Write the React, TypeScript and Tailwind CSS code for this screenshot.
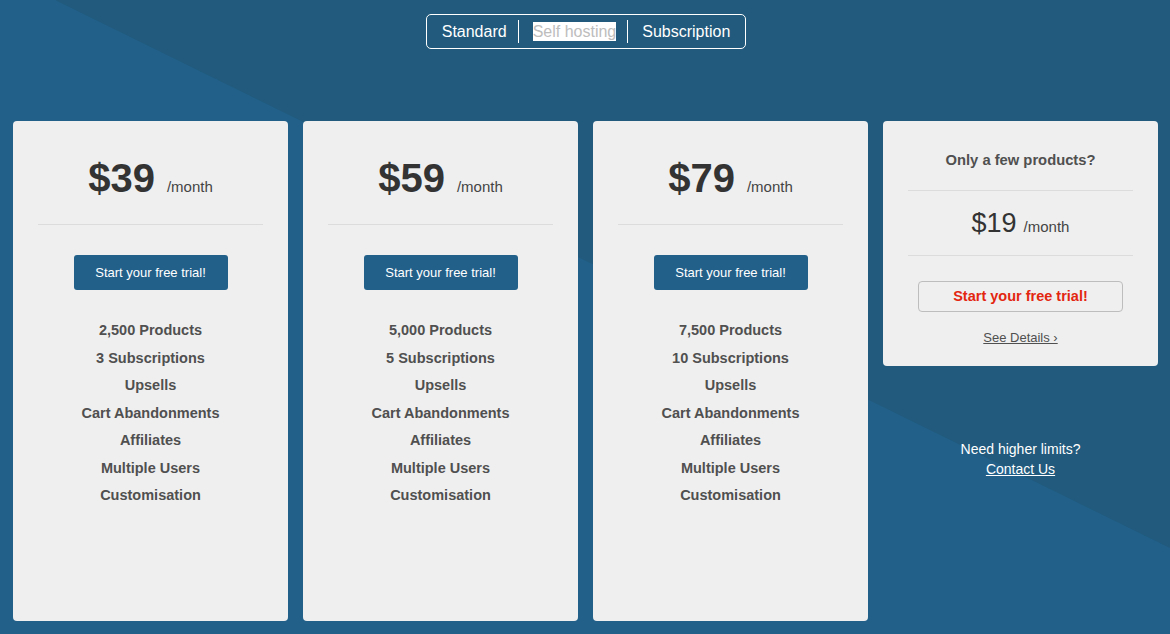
import React from "react";

const features = (a: string, b: string) => [
  a,
  b,
  "Upsells",
  "Cart Abandonments",
  "Affiliates",
  "Multiple Users",
  "Customisation",
];

const plans = [
  { price: "$39", items: features("2,500 Products", "3 Subscriptions") },
  { price: "$59", items: features("5,000 Products", "5 Subscriptions") },
  { price: "$79", items: features("7,500 Products", "10 Subscriptions") },
];

function PlanCard({ price, items }: { price: string; items: string[] }) {
  return (
    <div className="h-[500px] rounded bg-[#efefef] px-[25px] pt-[33px] flex flex-col items-center">
      <div className="flex items-baseline justify-center leading-[48px] h-[48px]">
        <span className="text-[40px] font-bold text-[#333]">{price}</span>
        <span className="ml-[12px] text-[15px] text-[#444]">/month</span>
      </div>
      <div className="mt-[22px] h-px w-full bg-[#dcdcdc]" />
      <button className="mt-[30px] h-[35px] w-[154px] rounded-[3px] bg-[#22608a] text-[13px] text-white">
        Start your free trial!
      </button>
      <ul className="mt-[27px] flex flex-col items-center">
        {items.map((f) => (
          <li key={f} className="text-[14.5px] font-bold leading-[27.5px] text-[#505050]">
            {f}
          </li>
        ))}
      </ul>
    </div>
  );
}

export default function App() {
  return (
    <div
      className="relative w-[1170px] h-[634px] overflow-hidden bg-[#22608a] text-white"
      style={{ fontFamily: '"Liberation Sans", Arial, sans-serif' }}
    >
      <svg
        className="absolute inset-0"
        width="1170"
        height="634"
        viewBox="0 0 1170 634"
      >
        <polygon points="55,0 1170,0 1170,548" fill="#215a7c" />
      </svg>
      <div className="relative flex flex-col items-center">
        <div className="mt-[14px] ml-[2px] flex h-[35px] items-center rounded-[5px] border border-white pl-[15px] pr-[15px] text-[16px]">
          <span>Standard</span>
          <span className="ml-[11px] mr-[14px] h-[23px] w-px bg-white" />
          <span className="bg-white text-[#bdbdbd] leading-[19px]">Self hosting</span>
          <span className="ml-[11px] mr-[14px] h-[23px] w-px bg-white" />
          <span>Subscription</span>
        </div>
        <div className="mt-[72px] flex w-full gap-[15px] pl-[13px] pr-[12px]">
          {plans.map((p) => (
            <div key={p.price} className="w-[275px]">
              <PlanCard price={p.price} items={p.items} />
            </div>
          ))}
          <div className="w-[275px] flex flex-col items-center">
            <div className="w-full rounded bg-[#efefef] px-[25px] pt-[29px] pb-[20px] flex flex-col items-center">
              <div className="text-[14.75px] font-bold leading-[20px] text-[#505050]">
                Only a few products?
              </div>
              <div className="mt-[20px] h-px w-full bg-[#dcdcdc]" />
              <div className="mt-[16px] flex h-[32px] items-baseline leading-[32px]">
                <span className="text-[27px] text-[#333]">$19</span>
                <span className="ml-[7px] text-[15px] text-[#444]">/month</span>
              </div>
              <div className="mt-[16px] h-px w-full bg-[#dcdcdc]" />
              <button className="mt-[25px] h-[31px] w-[205px] rounded-[4px] border border-[#bdbdbd] text-[14.5px] font-bold text-[#e3260f]">
                Start your free trial!
              </button>
              <a className="mt-[18px] text-[13px] leading-[16px] text-[#505050] underline">
                See Details ›
              </a>
            </div>
            <div className="mt-[73px] text-[14px] leading-[20px] text-center">
              <div>Need higher limits?</div>
              <a className="underline">Contact Us</a>
            </div>
          </div>
        </div>
      </div>
    </div>
  );
}
